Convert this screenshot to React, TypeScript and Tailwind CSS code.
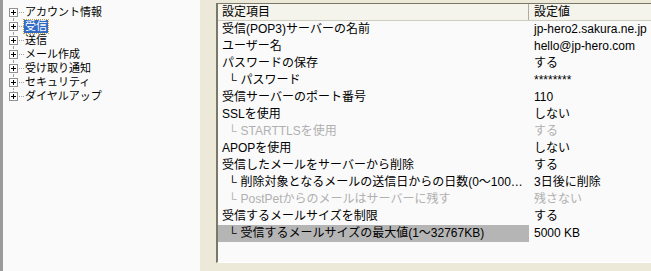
const treeItems = [
  "アカウント情報",
  "受信",
  "送信",
  "メール作成",
  "受け取り通知",
  "セキュリティ",
  "ダイヤルアップ",
];

type Row = {
  label: string;
  value: string;
  child?: boolean;
  disabled?: boolean;
  selected?: boolean;
};

const rows: Row[] = [
  { label: "受信(POP3)サーバーの名前", value: "jp-hero2.sakura.ne.jp" },
  { label: "ユーザー名", value: "hello@jp-hero.com" },
  { label: "パスワードの保存", value: "する" },
  { label: "パスワード", value: "********", child: true },
  { label: "受信サーバーのポート番号", value: "110" },
  { label: "SSLを使用", value: "しない" },
  { label: "STARTTLSを使用", value: "する", child: true, disabled: true },
  { label: "APOPを使用", value: "しない" },
  { label: "受信したメールをサーバーから削除", value: "する" },
  {
    label: "削除対象となるメールの送信日からの日数(0～1000日)",
    value: "3日後に削除",
    child: true,
  },
  {
    label: "PostPetからのメールはサーバーに残す",
    value: "残さない",
    child: true,
    disabled: true,
  },
  { label: "受信するメールサイズを制限", value: "する" },
  {
    label: "受信するメールサイズの最大値(1～32767KB)",
    value: "5000 KB",
    child: true,
    selected: true,
  },
];

function PlusBox() {
  return (
    <span className="relative z-10 flex h-[9px] w-[9px] items-center justify-center border border-[#919191] bg-white">
      <span className="absolute h-px w-[5px] bg-black" />
      <span className="absolute h-[5px] w-px bg-black" />
    </span>
  );
}

function TreeItem({ label, index, last }: { label: string; index: number; last: boolean }) {
  const selected = label === "受信";
  return (
    <div className="relative flex h-[14px] items-center text-[11px] leading-[13px]">
      <div className="relative flex h-[14px] w-[21px] shrink-0 items-center pl-[6px]">
        {/* vertical connector */}
        <span
          className={`absolute left-[10px] w-0 border-l border-dotted border-[#a0a0a0] ${
            index === 0 ? "top-[7px] h-[7px]" : last ? "top-0 h-[7px]" : "top-0 h-[14px]"
          }`}
        />
        <PlusBox />
        <span className="ml-px w-[5px] border-t border-dotted border-[#a0a0a0]" />
      </div>
      <span
        className={`whitespace-nowrap px-px ${
          selected ? "bg-[#316ac5] text-white outline outline-1 outline-dotted outline-[#c8a040]" : "text-black"
        }`}
      >
        {label}
      </span>
    </div>
  );
}

export default function App() {
  return (
    <div
      className="flex h-[271px] w-[651px] overflow-hidden bg-[#ece9d8] text-[12px] text-black"
      style={{ fontFamily: '"Liberation Sans", "Noto Sans CJK JP", sans-serif' }}
    >
      {/* left tree */}
      <div className="h-full w-[200px] shrink-0 border-l-[3px] border-[#9a9a9a] bg-[#fafafa] pt-[5px]">
        {treeItems.map((t, i) => (
          <TreeItem key={t} label={t} index={i} last={i === treeItems.length - 1} />
        ))}
      </div>

      {/* gap */}
      <div className="w-[16px] shrink-0" />

      {/* right list */}
      <div className="mt-[3px] mb-[8px] flex-1 border-t border-l-2 border-[#7a7868] border-b border-b-white bg-[#fafafa]">
        <div className="flex h-[17px] border-b border-[#cfcdbf] bg-[#f4f3ec] leading-[16px]">
          <div className="w-[311px] shrink-0 border-r border-[#b0ad9e] pl-[4px]">設定項目</div>
          <div className="pl-[5px]">設定値</div>
        </div>
        {rows.map((r) => (
          <div
            key={r.label}
            className={`flex h-[17px] leading-[17px] ${r.disabled ? "text-[#b0b0b0]" : "text-black"}`}
          >
            <div
              className={`w-[311px] shrink-0 overflow-hidden text-ellipsis whitespace-nowrap pl-[4px] ${
                r.selected ? "bg-[#b5b5b5]" : ""
              }`}
            >
              {r.child ? <span className="pl-[6px] pr-[4px]">└</span> : null}
              {r.label}
            </div>
            <div className="whitespace-nowrap pl-[5px]">{r.value}</div>
          </div>
        ))}
      </div>
    </div>
  );
}
